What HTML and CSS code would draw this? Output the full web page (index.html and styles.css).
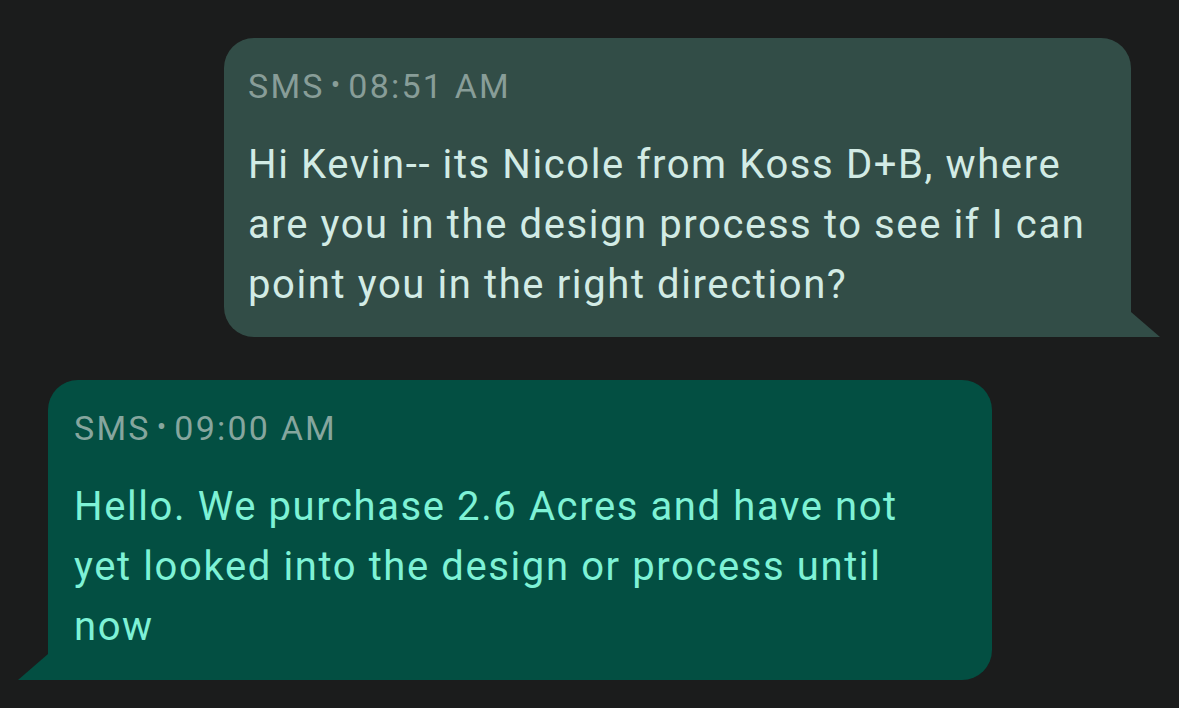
FILE: index.html
```html
<!DOCTYPE html>
<html>
<head>
<meta charset="utf-8">
<link rel="stylesheet" href="styles.css">
</head>
<body>
<div class="thread">
  <div class="bubble out">
    <div class="meta">SMS<span class="dot">•</span>08:51 AM</div>
    <div class="text">Hi Kevin-- its Nicole from Koss D+B, where are you in the design process to see if I can point you in the right direction?</div>
  </div>
  <div class="bubble in">
    <div class="meta">SMS<span class="dot">•</span>09:00 AM</div>
    <div class="text">Hello. We purchase 2.6 Acres and have not yet looked into the design or process until now</div>
  </div>
</div>
</body>
</html>
```

FILE: styles.css
```css
html, body {
  margin: 0;
  padding: 0;
  background: #1b1c1c;
  width: 1179px;
  height: 708px;
  overflow: hidden;
  font-family: Roboto, "Noto Sans", sans-serif;
}
.thread {
  display: flex;
  flex-direction: column;
  padding-top: 38px;
  gap: 43px;
}
.bubble {
  position: relative;
  box-sizing: border-box;
  border-radius: 30px;
}
.bubble.out {
  margin-left: 224px;
  width: 907px;
  height: 299px;
  background: #324d47;
  border-bottom-right-radius: 0;
  padding: 29px 10px 0 24px;
}
.bubble.out::after {
  content: "";
  position: absolute;
  right: -29px;
  bottom: 0;
  width: 29px;
  height: 25px;
  background: #324d47;
  clip-path: polygon(0 0, 100% 100%, 0 100%);
}
.bubble.in {
  margin-left: 48px;
  width: 944px;
  height: 300px;
  background: #034f42;
  border-bottom-left-radius: 0;
  padding: 29px 40px 0 26px;
}
.bubble.in::after {
  content: "";
  position: absolute;
  left: -30px;
  bottom: 0;
  width: 30px;
  height: 26px;
  background: #034f42;
  clip-path: polygon(100% 0, 100% 100%, 0 100%);
}
.meta {
  font-size: 34px;
  line-height: 36px;
  letter-spacing: 2.2px;
  color: #889d98;
}
.in .meta { color: #86a69e; }
.dot {
  font-size: 28px;
  margin: 0 6px 0 6px;
  vertical-align: 4px;
}
.text {
  margin-top: 31px;
  font-size: 40px;
  line-height: 60px;
  letter-spacing: 1.6px;
  color: #d2ebe5;
}
.in .text {
  color: #7ef2d6;
}
```
